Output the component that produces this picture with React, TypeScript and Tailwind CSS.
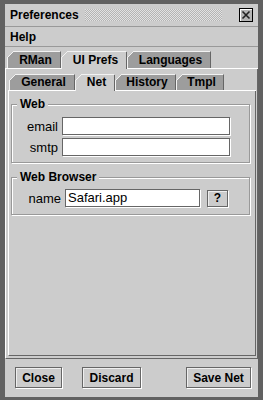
import React from 'react';

const font = "font-['Liberation_Sans',Arial,sans-serif]";

interface TabProps {
    label: string;
    w: number;
    h: number;
    width: string;
    active?: boolean;
}

// tab with cut top-left corner, drawn behind the label
const Tab: React.FC<TabProps> = ({ label, w, h, width, active }) => (
    <div className={`relative flex shrink-0 items-center justify-center ${width}`} style={{ height: h }}>
        <svg className="absolute inset-0" width={w} height={h} viewBox={`0 0 ${w} ${h}`} shapeRendering="crispEdges">
            <polygon points={`0,${active ? h : h - 1} 0,6 6,0 ${w},0 ${w},${active ? h : h - 1}`} fill={active ? '#cccccc' : '#9d9d9d'} />
            <path d={`M0.5 ${active ? h : h - 1} V6.5 L6.5 0.5 H${w - 1}`} stroke="#f2f2f2" fill="none" />
            <path d={`M${w - 0.5} 0.5 V${active ? h : h - 1}`} stroke="#666666" fill="none" />
            {!active && <path d={`M0 ${h - 0.5} H${w}`} stroke="#ffffff" fill="none" />}
        </svg>
        <span className="relative pb-px pl-[3px] text-[12px] font-bold leading-none text-black">{label}</span>
    </div>
);

const Field: React.FC<{ width: string; value?: string }> = ({ width, value = '' }) => (
    <div className={`h-[18px] border border-[#666] bg-white pl-[2px] text-[13px] leading-[16px] text-black shadow-[1px_1px_0_#fff] ${width}`}>
        {value}
    </div>
);

const Btn: React.FC<{ label: string; width: string }> = ({ label, width }) => (
    <button className={`flex h-[21px] items-center justify-center border border-[#666] bg-[#cccccc] text-[12px] font-bold text-black shadow-[1px_1px_0_#fff,inset_1px_1px_0_#eee] ${width}`}>
        {label}
    </button>
);

export default function App() {
    return (
        <div className={`h-[400px] w-[263px] bg-[#616161] pt-1 pr-[5px] pb-[3px] pl-[5px] ${font}`}>
            <div className="flex h-full flex-col bg-[#cccccc]">
                {/* title bar */}
                <div className="flex h-[23px] shrink-0 items-center border-b border-[#999] pl-[5px] pr-[5px]">
                    <span className="text-[12px] font-bold text-black">Preferences</span>
                    <div className="ml-[6px] h-[12px] w-[137px] bg-[repeating-conic-gradient(#b4b4b4_0%_25%,#e2e2e2_0%_50%)] bg-[length:2px_2px]" />
                    <svg className="ml-auto" width="14" height="14" viewBox="0 0 14 14" shapeRendering="crispEdges">
                        <rect x="0.5" y="0.5" width="13" height="13" fill="#b5b5b5" stroke="#000" />
                        <path d="M1.5 12.5 V1.5 H12.5" stroke="#fff" fill="none" />
                        <path d="M3.5 3.5 L10.5 10.5 M10.5 3.5 L3.5 10.5" stroke="#222" strokeWidth="1.6" shapeRendering="auto" />
                    </svg>
                </div>

                {/* menu */}
                <div className="flex h-[20px] shrink-0 items-center border-b border-[#999] pl-[5px]">
                    <span className="text-[12px] font-bold text-black">Help</span>
                </div>

                {/* outer tabs */}
                <div className="flex min-h-0 flex-1 flex-col pt-[4px]">
                    <div className="flex shrink-0 items-end">
                        <div className="h-[18px] w-[2px] border-b border-white" />
                        <Tab label="RMan" w={54} h={18} width="w-[54px]" />
                        <Tab label="UI Prefs" w={66} h={18} width="w-[66px]" active />
                        <Tab label="Languages" w={84} h={18} width="w-[84px]" />
                        <div className="h-[18px] flex-1 border-b border-white" />
                    </div>
                    <div className="flex min-h-0 flex-1 flex-col border-r border-b border-l border-r-[#666] border-b-[#666] border-l-white pt-[5px] pr-px pb-[2px] pl-[2px]">
                        {/* inner tabs */}
                        <div className="flex shrink-0 items-end">
                            <div className="h-[17px] w-px border-b border-white" />
                            <Tab label="General" w={66} h={17} width="w-[66px]" />
                            <Tab label="Net" w={40} h={17} width="w-[40px]" active />
                            <Tab label="History" w={61} h={17} width="w-[61px]" />
                            <Tab label="Tmpl" w={48} h={17} width="w-[48px]" />
                            <div className="h-[17px] flex-1 border-b border-white" />
                        </div>
                        <div className="flex min-h-0 flex-1 flex-col border-r border-b border-l border-r-[#666] border-b-[#666] border-l-white pt-[5px] pr-[5px] pl-[2px]">
                            <fieldset className="border border-[#999] pb-[6px] shadow-[inset_1px_1px_0_#fff,1px_1px_0_#fff]">
                                <legend className="ml-[5px] bg-[#cccccc] px-[3px] text-[12px] leading-[16px] font-bold text-black">Web</legend>
                                <div className="flex flex-col gap-[3px] pt-[5px]">
                                    <div className="flex items-center">
                                        <span className="w-[50px] pr-[4px] text-right text-[13px] leading-none text-black">email</span>
                                        <Field width="w-[168px]" />
                                    </div>
                                    <div className="flex items-center">
                                        <span className="w-[50px] pr-[4px] text-right text-[13px] leading-none text-black">smtp</span>
                                        <Field width="w-[168px]" />
                                    </div>
                                </div>
                            </fieldset>
                            <fieldset className="mt-[6px] border border-[#999] pb-[7px] shadow-[inset_1px_1px_0_#fff,1px_1px_0_#fff]">
                                <legend className="ml-[5px] bg-[#cccccc] px-[3px] text-[12px] leading-[16px] font-bold text-black">Web Browser</legend>
                                <div className="flex items-center pt-[4px]">
                                    <span className="w-[53px] pr-[4px] text-right text-[13px] leading-none text-black">name</span>
                                    <Field width="w-[135px]" value="Safari.app" />
                                    <Btn label="?" width="ml-[7px] w-[21px] !h-[17px]" />
                                </div>
                            </fieldset>
                        </div>
                    </div>
                </div>

                {/* buttons */}
                <div className="flex h-[38px] shrink-0 items-start pt-[8px] pr-[7px] pl-[10px]">
                    <Btn label="Close" width="w-[47px]" />
                    <Btn label="Discard" width="ml-[20px] w-[59px]" />
                    <div className="flex-1" />
                    <Btn label="Save Net" width="w-[65px]" />
                </div>
            </div>
        </div>
    );
}
